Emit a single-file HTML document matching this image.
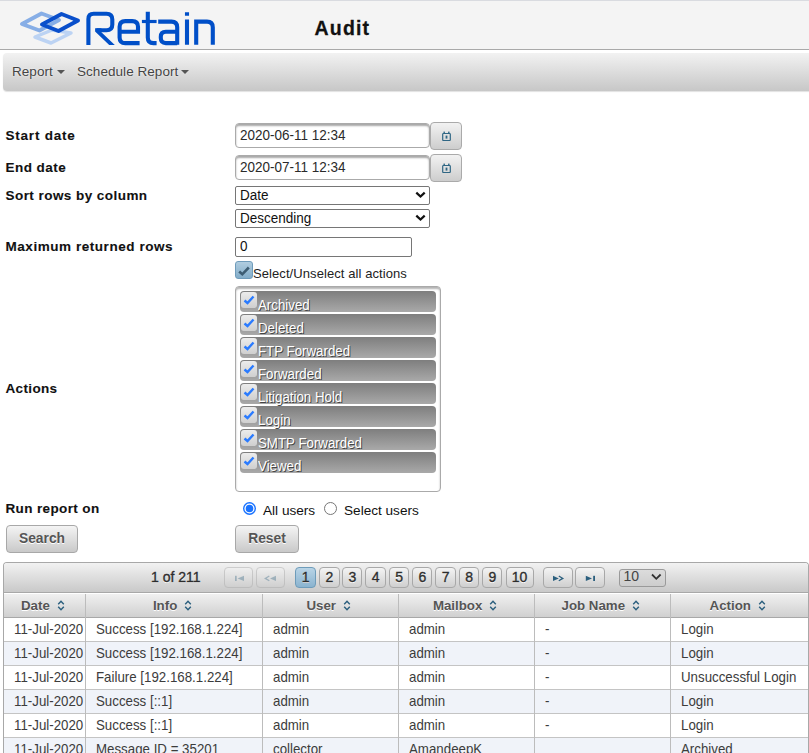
<!DOCTYPE html>
<html><head><meta charset="utf-8">
<style>
*{box-sizing:border-box;margin:0;padding:0}
html,body{width:809px;height:753px;overflow:hidden;background:#fff;font-family:"Liberation Sans",sans-serif;color:#222}
.a{position:absolute}
#hdr{left:0;top:0;width:809px;height:50px;background:#f4f4f4;border-top:1px solid #d9dbe0;border-bottom:1px solid #a9a9a9}
#title{left:314.5px;top:16.5px;font-size:19.5px;font-weight:bold;color:#111;letter-spacing:1.2px;-webkit-text-stroke:0.3px #111;text-shadow:0 0 2px #fff}
#menu{left:3px;top:53px;width:830px;height:38px;border-radius:4px;background:linear-gradient(#f2f2f2,#c7c7c7);box-shadow:0 1px 1px rgba(0,0,0,.12)}
.mi{top:63.5px;font-size:13.5px;color:#444;letter-spacing:0.05px;text-shadow:0 0 2px #fff}
.caret{position:absolute;top:70px;width:0;height:0;border-left:4px solid transparent;border-right:4px solid transparent;border-top:4.5px solid #555}
.lbl{left:5.5px;font-size:13.5px;font-weight:bold;color:#111;letter-spacing:0.45px;-webkit-text-stroke:0.1px #111}
.inp{left:235px;height:25px;width:195px;border:1px solid #aaa;border-radius:4px;background:#fff;box-shadow:inset 0 2px 2px rgba(0,0,0,.35)}
.inp span{position:absolute;left:4px;top:3px;font-size:13.5px;color:#2a2a2a;transform:scaleY(1.08);transform-origin:0 0}
.calbtn{left:430px;width:32px;height:28px;border:1px solid #aaa;border-radius:4px;background:linear-gradient(#f2f2f2,#cdcdcd)}
.sel{left:235px;width:195px;height:19px;border:1px solid #767676;border-radius:2px;background:#fff}
.sel span{position:absolute;left:4px;top:0px;font-size:13.5px;color:#111;transform:scaleY(1.08);transform-origin:0 0}
.chev{position:absolute;right:3.3px;top:4.3px}
.btn{height:28px;border:1px solid #a8a8a8;border-radius:4px;background:linear-gradient(#f4f4f4,#c9c9c9);font-size:13.8px;font-weight:bold;color:#555;text-align:center;line-height:25px;text-shadow:0 1px 0 #fff}
.it{left:240px;width:196px;height:21px;border-radius:4px;background:linear-gradient(#7e7e7e,#a9a9a9)}
.it .cb{position:absolute;left:1px;top:1px;width:16px;height:16px;border-radius:3px;background:linear-gradient(#ececec,#cfcfcf)}
.it .t{position:absolute;left:18px;top:5.5px;font-size:13.3px;color:#fff;text-shadow:1px 1px 0.6px #444;transform:scaleY(1.07);transform-origin:0 0}
#tbl{left:3px;top:562px;width:806px;height:200px;border:1px solid #a8a8a8;border-bottom:none;border-radius:4px 4px 0 0;overflow:hidden;background:#fff}
#pager{left:0;top:0;width:804px;height:30px;background:linear-gradient(#f2f2f2,#c9c9c9);border-bottom:1px solid #a8a8a8}
.pb{top:4.4px;height:20.2px;border:1px solid #a8a8a8;border-radius:4px;background:linear-gradient(#f4f4f4,#cfcfcf);font-size:14px;color:#2a2a2a;text-align:center;line-height:18px;text-shadow:0 1px 0 #fff;-webkit-text-stroke:0.35px #333}
.pb.act{background:linear-gradient(#b9d4e6,#8ab3cf);border-color:#6e9cba}
.pb.dis{opacity:.45}
.th{top:31px;height:24px;background:linear-gradient(#f0f0f0,#d0d0d0);border-bottom:1px solid #a8a8a8;font-size:13px;font-weight:bold;color:#555;text-align:center;line-height:22px;text-shadow:0 1px 0 #fff}
.tr{left:0;width:804px;height:24px;border-bottom:1px solid #c4c4c4}
.tr.alt{background:#f0f3f9}
.td{top:0;height:23px;font-size:13.3px;color:#3c3c3c;line-height:23px;white-space:nowrap;transform:scaleY(1.05)}
.vl{top:31px;width:1px;height:200px;background:#bcbcbc}
.thl{top:30.5px;height:24px;font-size:13.3px;font-weight:bold;color:#555;line-height:24px;text-shadow:0 1px 0 #fff;white-space:nowrap}
</style></head><body>
<div id="hdr" class="a"></div>
<svg class="a" style="left:0;top:0" width="230" height="49" viewBox="0 0 230 49">
  <g fill="none" stroke-linejoin="round">
    <path d="M22 24 L41.5 13.5 L59 20 L39.5 30.5 Z" stroke="#87aee6" stroke-width="4"/>
    <path d="M35 37 L52 30 L71 33 L51 43 Z" stroke="#bcd3f3" stroke-width="3.5"/>
    <path d="M42 24.5 L61.5 14 L78 20.5 L58.5 31 Z" stroke="#0a4fcb" stroke-width="4"/>
  </g>
  <g fill="none" stroke="#004fc8" stroke-width="4.1">
    <path d="M88.4 45.1 V19 Q88.4 13.7 93.7 13.7 H106.5 Q112.3 13.7 112.3 19.5 V24.5 Q112.3 30.3 106.5 30.3 H96.5"/>
    <path d="M95.1 28.3 H101.4 V32.2 L114.8 45.1 H109.2 L95.1 31.6 Z" fill="#004fc8" stroke="none"/>
    <path d="M120.5 31.7 H138 V26.8 Q138 21.1 132.3 21.1 H125.3 Q119.6 21.1 119.6 26.8 V37.4 Q119.6 43.1 125.3 43.1 H139.6"/>
    <path d="M147.8 11.8 V37.5 Q147.8 43.1 153.4 43.1 H156.6"/>
    <path d="M141.9 21.5 H156.6" stroke-width="3.2"/>
    <path d="M158.2 21.6 H171.5 Q177.2 21.6 177.2 27.3 V44.8"/>
    <path d="M177.2 31.7 H165.8 Q160.8 31.7 160.8 36.7 V38.1 Q160.8 43.1 165.8 43.1 H177.2"/>
    <path d="M187 19.4 V44.8 M187 12.2 V15.8"/>
    <path d="M196.2 44.8 V21.6 H207 Q212.8 21.6 212.8 27.4 V44.8"/>
  </g>
</svg>
<div id="title" class="a">Audit</div>
<div id="menu" class="a"></div>
<div class="a mi" style="left:12px">Report</div><div class="caret" style="left:57px"></div>
<div class="a mi" style="left:77px">Schedule Report</div><div class="caret" style="left:181px"></div>

<div class="a lbl" style="top:128px;letter-spacing:0.78px">Start date</div>
<div class="a lbl" style="top:160px">End date</div>
<div class="a lbl" style="top:188px">Sort rows by column</div>
<div class="a lbl" style="top:239px;letter-spacing:0.55px">Maximum returned rows</div>
<div class="a lbl" style="top:381px;letter-spacing:0.35px">Actions</div>
<div class="a lbl" style="top:501px;letter-spacing:0.37px">Run report on</div>

<div class="a inp" style="top:123px"><span>2020-06-11 12:34</span></div>
<div class="a calbtn" style="top:122px"><svg style="position:absolute;left:11px;top:8px" width="9" height="10" viewBox="0 0 9 10"><path d="M1.5 2.5 H7.5 Q8.3 2.5 8.3 3.3 V8.7 Q8.3 9.5 7.5 9.5 H1.5 Q0.7 9.5 0.7 8.7 V3.3 Q0.7 2.5 1.5 2.5 Z" fill="none" stroke="#2f6684" stroke-width="1.2"/><rect x="1.5" y="0.6" width="1.4" height="2.4" fill="#2f6684"/><rect x="6.1" y="0.6" width="1.4" height="2.4" fill="#2f6684"/><rect x="3.6" y="4.6" width="1.8" height="3" fill="#2f6684"/></svg></div>
<div class="a inp" style="top:155px"><span>2020-07-11 12:34</span></div>
<div class="a calbtn" style="top:154px"><svg style="position:absolute;left:11px;top:8px" width="9" height="10" viewBox="0 0 9 10"><path d="M1.5 2.5 H7.5 Q8.3 2.5 8.3 3.3 V8.7 Q8.3 9.5 7.5 9.5 H1.5 Q0.7 9.5 0.7 8.7 V3.3 Q0.7 2.5 1.5 2.5 Z" fill="none" stroke="#2f6684" stroke-width="1.2"/><rect x="1.5" y="0.6" width="1.4" height="2.4" fill="#2f6684"/><rect x="6.1" y="0.6" width="1.4" height="2.4" fill="#2f6684"/><rect x="3.6" y="4.6" width="1.8" height="3" fill="#2f6684"/></svg></div>
<div class="a sel" style="top:186px"><span>Date</span><svg class="chev" width="11" height="8" viewBox="0 0 11 8"><path d="M1.3 1.6 L5.5 5.6 L9.7 1.6" fill="none" stroke="#111" stroke-width="2.2"/></svg></div>
<div class="a sel" style="top:209px"><span>Descending</span><svg class="chev" width="11" height="8" viewBox="0 0 11 8"><path d="M1.3 1.6 L5.5 5.6 L9.7 1.6" fill="none" stroke="#111" stroke-width="2.2"/></svg></div>

<div class="a" style="left:235px;top:237px;width:177px;height:20px;border:1px solid #767676;border-radius:2px;background:#fff"><span style="position:absolute;left:4px;top:0px;font-size:13.5px;color:#111;transform:scaleY(1.08);transform-origin:0 0">0</span></div>
<div class="a" style="left:235px;top:261px;width:18px;height:18px;border:1px solid #6f9cbb;border-radius:3px;background:linear-gradient(#b0cde0,#83adc9)"><svg width="16" height="16" style="position:absolute;left:0;top:0"><path d="M3.2 9.5 L6.3 12.3 L12.8 5.5" fill="none" stroke="#3d5d73" stroke-width="2.6"/></svg></div>
<div class="a" style="left:253px;top:266px;font-size:13px;color:#222;letter-spacing:0.08px">Select/Unselect all actions</div>
<div class="a" style="left:235px;top:286px;width:206px;height:206px;border:1px solid #aaa;border-radius:4px;background:#fff;box-shadow:inset 0 2px 2px rgba(0,0,0,.3)"></div>
<div class="a it" style="top:291px"><div class="cb"><svg width="16" height="16" style="position:absolute;left:0;top:0"><path d="M3.5 8.5 L6.5 11 L12.5 4.5" fill="none" stroke="#2a7bff" stroke-width="2.4"/></svg></div><div class="t">Archived</div></div>
<div class="a it" style="top:314px"><div class="cb"><svg width="16" height="16" style="position:absolute;left:0;top:0"><path d="M3.5 8.5 L6.5 11 L12.5 4.5" fill="none" stroke="#2a7bff" stroke-width="2.4"/></svg></div><div class="t">Deleted</div></div>
<div class="a it" style="top:337px"><div class="cb"><svg width="16" height="16" style="position:absolute;left:0;top:0"><path d="M3.5 8.5 L6.5 11 L12.5 4.5" fill="none" stroke="#2a7bff" stroke-width="2.4"/></svg></div><div class="t">FTP Forwarded</div></div>
<div class="a it" style="top:360px"><div class="cb"><svg width="16" height="16" style="position:absolute;left:0;top:0"><path d="M3.5 8.5 L6.5 11 L12.5 4.5" fill="none" stroke="#2a7bff" stroke-width="2.4"/></svg></div><div class="t">Forwarded</div></div>
<div class="a it" style="top:383px"><div class="cb"><svg width="16" height="16" style="position:absolute;left:0;top:0"><path d="M3.5 8.5 L6.5 11 L12.5 4.5" fill="none" stroke="#2a7bff" stroke-width="2.4"/></svg></div><div class="t">Litigation Hold</div></div>
<div class="a it" style="top:406px"><div class="cb"><svg width="16" height="16" style="position:absolute;left:0;top:0"><path d="M3.5 8.5 L6.5 11 L12.5 4.5" fill="none" stroke="#2a7bff" stroke-width="2.4"/></svg></div><div class="t">Login</div></div>
<div class="a it" style="top:429px"><div class="cb"><svg width="16" height="16" style="position:absolute;left:0;top:0"><path d="M3.5 8.5 L6.5 11 L12.5 4.5" fill="none" stroke="#2a7bff" stroke-width="2.4"/></svg></div><div class="t">SMTP Forwarded</div></div>
<div class="a it" style="top:452px"><div class="cb"><svg width="16" height="16" style="position:absolute;left:0;top:0"><path d="M3.5 8.5 L6.5 11 L12.5 4.5" fill="none" stroke="#2a7bff" stroke-width="2.4"/></svg></div><div class="t">Viewed</div></div>

<svg class="a" style="left:240px;top:500px" width="20" height="20"><circle cx="9.5" cy="8.5" r="5.8" fill="#fff" stroke="#1a73ff" stroke-width="1.4"/><circle cx="9.5" cy="8.5" r="3.8" fill="#1a73ff"/></svg>
<div class="a" style="left:263px;top:502.5px;font-size:13.6px;color:#111">All users</div>
<svg class="a" style="left:321px;top:500px" width="20" height="20"><circle cx="9.5" cy="8.5" r="6" fill="#fff" stroke="#777" stroke-width="1"/></svg>
<div class="a" style="left:344px;top:502.5px;font-size:13.6px;color:#111">Select users</div>
<div class="a btn" style="left:6px;top:525px;width:72px">Search</div>
<div class="a btn" style="left:235px;top:525px;width:64px">Reset</div>
<!--TBL--><div id="tbl" class="a">
<div id="pager" class="a"></div>
<div class="a" style="left:147.0px;top:5.5px;font-size:14px;color:#2a2a2a;text-shadow:0 1px 0 #fff;-webkit-text-stroke:0.35px #333">1 of 211</div>
<div class="a pb dis" style="left:220.4px;width:29px"></div>
<div class="a pb dis" style="left:252.4px;width:29px"></div>
<div class="a pb act" style="left:291.2px;width:21.1px">1</div>
<div class="a pb" style="left:315.3px;width:20.4px">2</div>
<div class="a pb" style="left:338.4px;width:20.1px">3</div>
<div class="a pb" style="left:361.4px;width:20.6px">4</div>
<div class="a pb" style="left:385.1px;width:20.2px">5</div>
<div class="a pb" style="left:408.4px;width:20.0px">6</div>
<div class="a pb" style="left:431.2px;width:21.0px">7</div>
<div class="a pb" style="left:455.3px;width:19.8px">8</div>
<div class="a pb" style="left:478.2px;width:20.3px">9</div>
<div class="a pb" style="left:501.6px;width:28.0px">10</div>
<div class="a pb" style="left:539.3px;width:29.4px"></div>
<div class="a pb" style="left:571.3px;width:29.4px"></div>
<div class="a" style="left:615.4px;top:5.6px;width:46.5px;height:18px;border:1px solid #9a9a9a;border-radius:3px;background:linear-gradient(#dcdcdc,#cdcdcd);"></div>
<div class="a" style="left:619.5px;top:5.3px;font-size:14px;color:#444">10</div>
<svg class="a" style="left:0;top:0" width="804" height="30" viewBox="4 563 804 30">
<g fill="#2b5f7e">
<g opacity="0.35"><rect x="235" y="575.8" width="1.7" height="5.2"/><path d="M244 575.8 L237.6 578.4 L244 581 Z"/>
<path d="M269.3 576 L265.3 578.4 L269.3 580.8" fill="none" stroke="#2b5f7e" stroke-width="1.3"/><path d="M276 575.8 L270 578.4 L276 581 Z"/></g>
<path d="M553 575.8 L558.8 578.4 L553 581 Z"/><path d="M558.8 576 L562.8 578.4 L558.8 580.8" fill="none" stroke="#2b5f7e" stroke-width="1.3"/>
<path d="M585.8 575.8 L592 578.4 L585.8 581 Z"/><rect x="593.2" y="575.8" width="1.8" height="5.2"/>
</g>
<path d="M652 574.5 L656.3 578.8 L660.6 574.5" fill="none" stroke="#333" stroke-width="1.8"/>
</svg>
<div class="a th" style="left:0px;width:81px"></div>
<div class="a th" style="left:82px;width:176px"></div>
<div class="a th" style="left:259px;width:135px"></div>
<div class="a th" style="left:395px;width:135px"></div>
<div class="a th" style="left:531px;width:135px"></div>
<div class="a th" style="left:667px;width:137px"></div>
<div class="a thl" style="left:17.0px" id="h0">Date<svg width="8" height="11" viewBox="0 0 8 11" style="margin-left:7px;vertical-align:-1px"><path d="M1.2 4.3 L4 1.3 L6.8 4.3 M1.2 6.7 L4 9.7 L6.8 6.7" fill="none" stroke="#2b5f7e" stroke-width="1.4"/></svg></div>
<div class="a thl" style="left:148.9px" id="h1">Info<svg width="8" height="11" viewBox="0 0 8 11" style="margin-left:7px;vertical-align:-1px"><path d="M1.2 4.3 L4 1.3 L6.8 4.3 M1.2 6.7 L4 9.7 L6.8 6.7" fill="none" stroke="#2b5f7e" stroke-width="1.4"/></svg></div>
<div class="a thl" style="left:302.4px" id="h2">User<svg width="8" height="11" viewBox="0 0 8 11" style="margin-left:7px;vertical-align:-1px"><path d="M1.2 4.3 L4 1.3 L6.8 4.3 M1.2 6.7 L4 9.7 L6.8 6.7" fill="none" stroke="#2b5f7e" stroke-width="1.4"/></svg></div>
<div class="a thl" style="left:428.9px" id="h3">Mailbox<svg width="8" height="11" viewBox="0 0 8 11" style="margin-left:7px;vertical-align:-1px"><path d="M1.2 4.3 L4 1.3 L6.8 4.3 M1.2 6.7 L4 9.7 L6.8 6.7" fill="none" stroke="#2b5f7e" stroke-width="1.4"/></svg></div>
<div class="a thl" style="left:557.5px" id="h4">Job Name<svg width="8" height="11" viewBox="0 0 8 11" style="margin-left:7px;vertical-align:-1px"><path d="M1.2 4.3 L4 1.3 L6.8 4.3 M1.2 6.7 L4 9.7 L6.8 6.7" fill="none" stroke="#2b5f7e" stroke-width="1.4"/></svg></div>
<div class="a thl" style="left:705.6px" id="h5">Action<svg width="8" height="11" viewBox="0 0 8 11" style="margin-left:7px;vertical-align:-1px"><path d="M1.2 4.3 L4 1.3 L6.8 4.3 M1.2 6.7 L4 9.7 L6.8 6.7" fill="none" stroke="#2b5f7e" stroke-width="1.4"/></svg></div>
<div class="a tr" style="top:55px">
<div class="a td" style="left:10px">11-Jul-2020</div><div class="a td" style="left:92px">Success [192.168.1.224]</div><div class="a td" style="left:269px">admin</div><div class="a td" style="left:405px">admin</div><div class="a td" style="left:541px">-</div><div class="a td" style="left:677px">Login</div></div>
<div class="a tr alt" style="top:79px">
<div class="a td" style="left:10px">11-Jul-2020</div><div class="a td" style="left:92px">Success [192.168.1.224]</div><div class="a td" style="left:269px">admin</div><div class="a td" style="left:405px">admin</div><div class="a td" style="left:541px">-</div><div class="a td" style="left:677px">Login</div></div>
<div class="a tr" style="top:103px">
<div class="a td" style="left:10px">11-Jul-2020</div><div class="a td" style="left:92px">Failure [192.168.1.224]</div><div class="a td" style="left:269px">admin</div><div class="a td" style="left:405px">admin</div><div class="a td" style="left:541px">-</div><div class="a td" style="left:677px">Unsuccessful Login</div></div>
<div class="a tr alt" style="top:127px">
<div class="a td" style="left:10px">11-Jul-2020</div><div class="a td" style="left:92px">Success [::1]</div><div class="a td" style="left:269px">admin</div><div class="a td" style="left:405px">admin</div><div class="a td" style="left:541px">-</div><div class="a td" style="left:677px">Login</div></div>
<div class="a tr" style="top:151px">
<div class="a td" style="left:10px">11-Jul-2020</div><div class="a td" style="left:92px">Success [::1]</div><div class="a td" style="left:269px">admin</div><div class="a td" style="left:405px">admin</div><div class="a td" style="left:541px">-</div><div class="a td" style="left:677px">Login</div></div>
<div class="a tr alt" style="top:175px">
<div class="a td" style="left:10px">11-Jul-2020</div><div class="a td" style="left:92px">Message ID = 35201</div><div class="a td" style="left:269px">collector</div><div class="a td" style="left:405px">AmandeepK</div><div class="a td" style="left:541px"></div><div class="a td" style="left:677px">Archived</div></div>
<div class="a vl" style="left:81px"></div>
<div class="a vl" style="left:258px"></div>
<div class="a vl" style="left:394px"></div>
<div class="a vl" style="left:530px"></div>
<div class="a vl" style="left:666px"></div>
</div>
<!--/TBL--></body></html>
